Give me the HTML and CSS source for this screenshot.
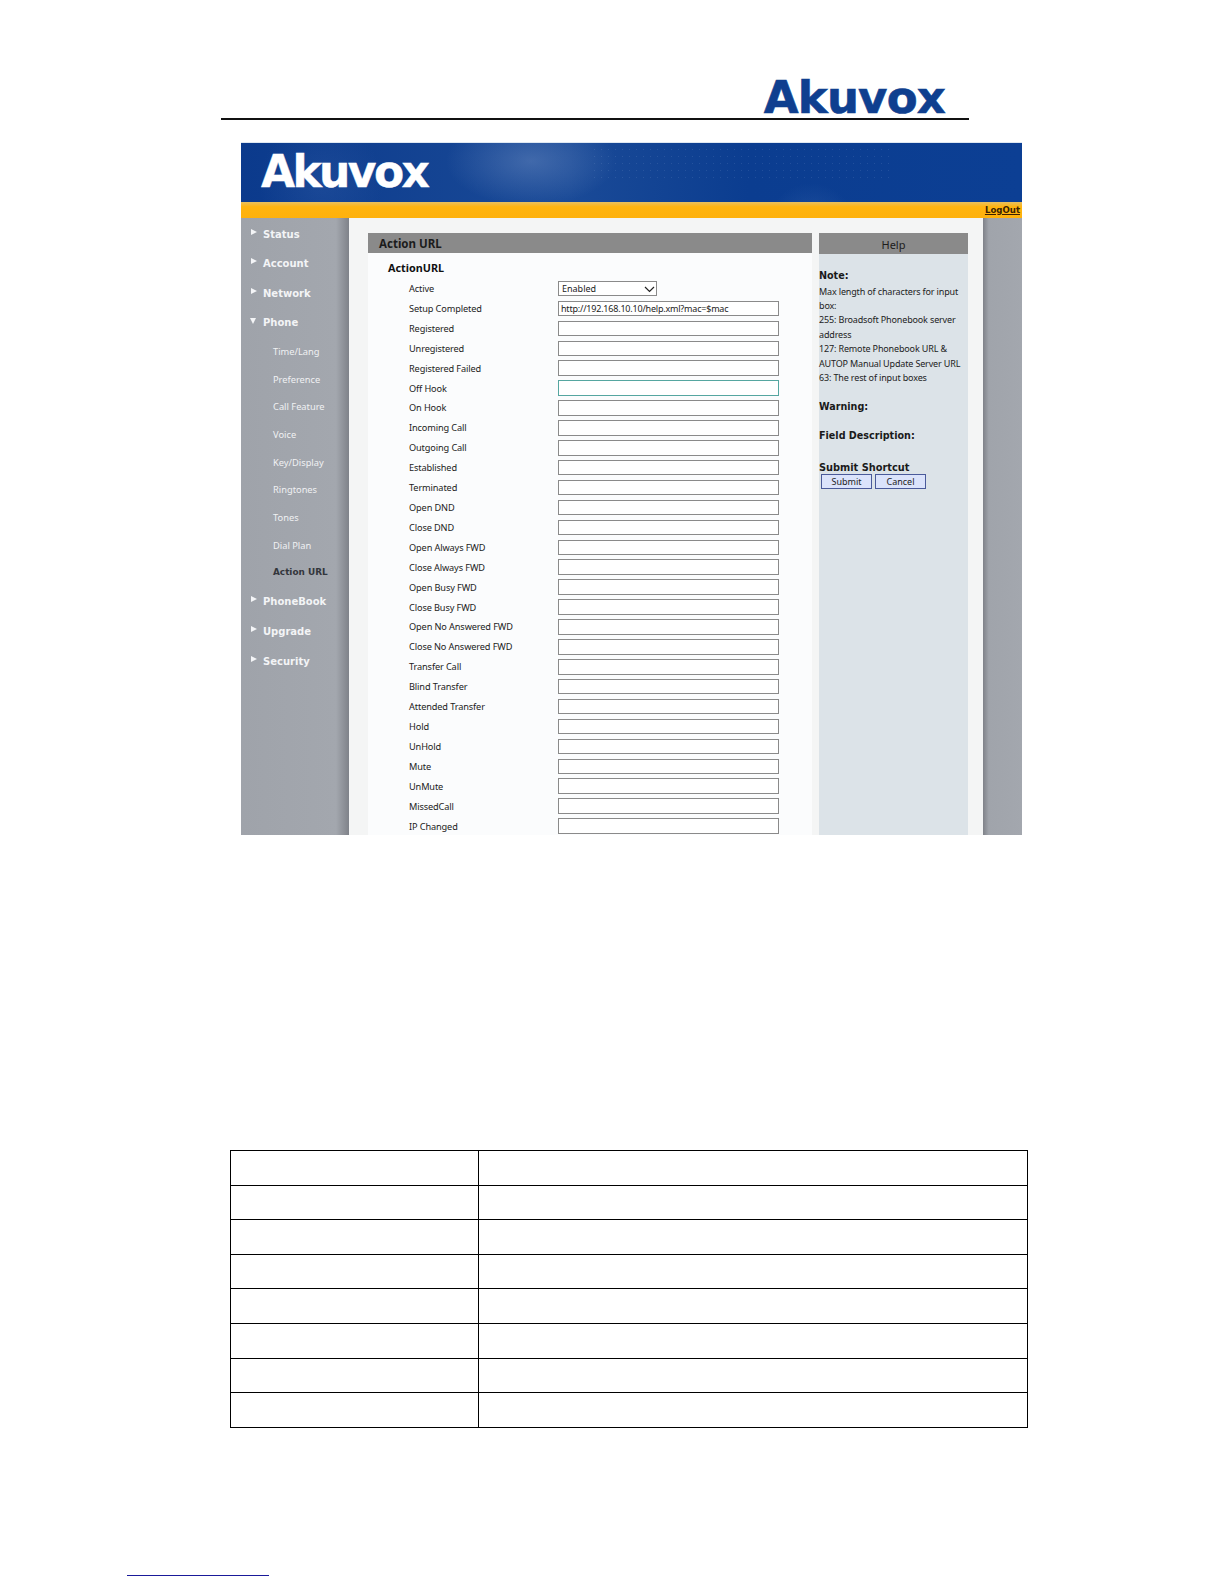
FILE: index.html
```html
<!DOCTYPE html>
<html lang="en">
<head>
<meta charset="utf-8">
<title>Akuvox Action URL</title>
<link rel="stylesheet" href="styles.css">
</head>
<body>
<div class="page">
  <header class="doc-header"><span class="doc-logo">Akuvox</span></header>

  <section class="shot">
    <div class="banner"><span class="banner-logo">Akuvox</span></div>
    <div class="strip"><a class="logout">LogOut</a></div>
    <div class="body">
      <nav class="side">
        <div class="nav"><i class="tri"></i>Status</div>
        <div class="nav"><i class="tri"></i>Account</div>
        <div class="nav"><i class="tri"></i>Network</div>
        <div class="nav"><i class="tri down"></i>Phone</div>
        <div class="sub">Time/Lang</div>
        <div class="sub">Preference</div>
        <div class="sub">Call Feature</div>
        <div class="sub">Voice</div>
        <div class="sub">Key/Display</div>
        <div class="sub">Ringtones</div>
        <div class="sub">Tones</div>
        <div class="sub">Dial Plan</div>
        <div class="sub current">Action URL</div>
        <div class="nav"><i class="tri"></i>PhoneBook</div>
        <div class="nav"><i class="tri"></i>Upgrade</div>
        <div class="nav"><i class="tri"></i>Security</div>
      </nav>
      <div class="content">
        <main class="form-panel">
          <h1 class="form-title">Action URL</h1>
          <h2 class="form-heading">ActionURL</h2>
          <div class="rows">
            <label>Active</label>
            <span class="sel-wrap"><select class="sel"><option>Enabled</option></select><svg class="chev" width="11" height="7" viewBox="0 0 11 7"><path d="M1 1l4.5 4.5L10 1" fill="none" stroke="#222" stroke-width="1.2"/></svg></span>
            <label>Setup Completed</label><input class="url" value="http://192.168.10.10/help.xml?mac=$mac">
            <label>Registered</label><input class="url">
            <label>Unregistered</label><input class="url">
            <label>Registered Failed</label><input class="url">
            <label>Off Hook</label><input class="url focus">
            <label>On Hook</label><input class="url">
            <label>Incoming Call</label><input class="url">
            <label>Outgoing Call</label><input class="url">
            <label>Established</label><input class="url">
            <label>Terminated</label><input class="url">
            <label>Open DND</label><input class="url">
            <label>Close DND</label><input class="url">
            <label>Open Always FWD</label><input class="url">
            <label>Close Always FWD</label><input class="url">
            <label>Open Busy FWD</label><input class="url">
            <label>Close Busy FWD</label><input class="url">
            <label>Open No Answered FWD</label><input class="url">
            <label>Close No Answered FWD</label><input class="url">
            <label>Transfer Call</label><input class="url">
            <label>Blind Transfer</label><input class="url">
            <label>Attended Transfer</label><input class="url">
            <label>Hold</label><input class="url">
            <label>UnHold</label><input class="url">
            <label>Mute</label><input class="url">
            <label>UnMute</label><input class="url">
            <label>MissedCall</label><input class="url">
            <label>IP Changed</label><input class="url">
          </div>
        </main>
        <aside class="help">
          <div class="help-title">Help</div>
          <h3 class="h-note">Note:</h3>
          <p class="help-text">Max length of characters for input<br>box:<br>255: Broadsoft Phonebook server<br>address<br>127: Remote Phonebook URL &amp;<br>AUTOP Manual Update Server URL<br>63: The rest of input boxes</p>
          <h3 class="h-warn">Warning:</h3>
          <h3 class="h-field">Field Description:</h3>
          <h3 class="h-short">Submit Shortcut</h3>
          <div class="btns"><button class="btn">Submit</button><button class="btn">Cancel</button></div>
        </aside>
      </div>
      <div class="side-right"></div>
    </div>
  </section>

  <table class="doc-table">
    <tr><td></td><td></td></tr>
    <tr><td></td><td></td></tr>
    <tr><td></td><td></td></tr>
    <tr><td></td><td></td></tr>
    <tr><td></td><td></td></tr>
    <tr><td></td><td></td></tr>
    <tr><td></td><td></td></tr>
    <tr><td></td><td></td></tr>
  </table>

  <div class="foot-line"></div>
</div>
</body>
</html>
```
FILE: styles.css
```css
* { box-sizing: border-box; }
html, body { margin: 0; padding: 0; background: #fff; }
.page { width: 1224px; height: 1584px; overflow: hidden; background: #fff; font-family: "Noto Sans", "Liberation Sans", sans-serif; }

.doc-header { margin-left: 221px; width: 748px; height: 120px; border-bottom: 2px solid #111; display: flex; justify-content: flex-end; align-items: flex-end; padding-right: 24px; }
.doc-logo { font: 800 45px/45px "DejaVu Sans", sans-serif; color: #0f3f8f; letter-spacing: -.8px; margin-bottom: -2px; -webkit-text-stroke: .6px #0f3f8f; }

.shot { margin: 22px 0 0 241px; width: 781px; height: 693px; overflow: hidden; display: flex; flex-direction: column; font-size: 9.2px; color: #222; }

.banner { position: relative; height: 60px; flex: none; padding: 0 0 0 20px; overflow: hidden; border-top: 1px solid #dfe8f2;
  background:
    radial-gradient(ellipse 85px 45px at 290px 18px, rgba(120,150,200,.42), rgba(120,150,200,0) 100%),
    radial-gradient(circle 62px at 80px 40px, rgba(70,110,180,.22), rgba(70,110,180,0) 100%),
    radial-gradient(circle 45px at 570px 85px, rgba(90,130,190,.28), rgba(90,130,190,0) 100%),
    linear-gradient(90deg, #0b3a8c 0%, #1a4a97 42%, #0b3d90 65%, #0c3f94 100%); }
.banner::after { content: ""; position: absolute; left: 350px; top: 3px; width: 300px; height: 36px;
  background-image: radial-gradient(circle 1px, rgba(190,210,240,.35) 60%, transparent 100%); background-size: 7px 7px; opacity: .35; }
.banner-logo { display: block; font: 800 44px/58px "DejaVu Sans", sans-serif; color: #fff; letter-spacing: -2.6px; -webkit-text-stroke: .4px #fff; }

.strip { height: 16px; flex: none; background: linear-gradient(#e8c060 0, #ffb40f 30%, #feb10c 100%); display: flex; justify-content: flex-end; align-items: center; padding-right: 2px; }
.logout { font: 700 8.6px/18px "DejaVu Sans", sans-serif; color: #3a1f00; text-decoration: underline; }

.body { display: flex; flex: 1; min-height: 0; }
.side { width: 108px; flex: none; padding-top: 1.5px; background: linear-gradient(90deg, #9fa3aa 0, #a3a7ae 88%, #7f8289 100%); }
.nav { height: 29.6px; padding-left: 22px; position: relative; font: 700 10px/29.6px "DejaVu Sans", sans-serif; color: #f3f4f6; }
.tri { position: absolute; left: 10px; top: 9px; width: 0; height: 0; border-left: 6px solid #f4f5f7; border-top: 3.5px solid transparent; border-bottom: 3.5px solid transparent; }
.tri.down { left: 9px; top: 10px; border-top: 6px solid #f4f5f7; border-bottom: 0; border-left: 3.5px solid transparent; border-right: 3.5px solid transparent; }
.sub { height: 27.7px; line-height: 27.7px; padding-left: 32px; color: #f0f1f3; font-size: 9.3px; }
.sub.current { margin-bottom: .4px; color: #33363c; font-weight: 700; font-family: "DejaVu Sans", sans-serif; font-size: 8.9px; }

.content { width: 634px; flex: none; display: flex; gap: 7px; padding: 15px 16px 0 19px; background: #f4f5f5; }
.form-panel { width: 444px; flex: none; background: #fbfcfd; }
.form-title { margin: 0; height: 20px; padding-left: 11px; background: #8a8a8a; font: 700 11.5px/22px "Noto Sans", sans-serif; color: #1c1c1c; }
.form-heading { margin: 7px 0 2.6px 20px; font: 700 10.8px/16px "Noto Sans", sans-serif; color: #111; }
.rows { display: grid; grid-template-columns: 149px 221px; grid-auto-rows: 19.92px; padding-left: 41px; align-items: center; justify-items: start; }
.rows label { white-space: nowrap; color: #222; font-size: 9.2px; letter-spacing: -.12px; }
.url { width: 221px; height: 15.5px; padding: 0 2px; border: 1px solid #8a8a8a; background: #fff; font: 9px "Noto Sans", sans-serif; letter-spacing: -.2px; color: #222; border-radius: 0; outline: 0; }
.url.focus { border-color: #55a6a0; }
.sel-wrap { position: relative; display: block; width: 99px; height: 15px; }
.sel { display: block; appearance: none; -webkit-appearance: none; width: 99px; height: 15px; padding: 0 0 2px 3px; border: 1px solid #8a8a8a; background: #fff; font: 9px "Noto Sans", sans-serif; color: #222; border-radius: 0; }
.chev { position: absolute; right: 2px; top: 5px; }

.help { width: 149px; flex: none; background: #dce3e8; white-space: nowrap; }
.help-title { height: 21px; padding-top: 1px; background: #8a8a8a; text-align: center; font-size: 11px; line-height: 21px; color: #1c1c1c; }
.help h3 { margin: 0; font: 700 9.6px/14px "DejaVu Sans", sans-serif; color: #1a1a1a; }
.help .h-note { padding-top: 15px; }
.help .h-warn { margin-top: 14.5px; }
.help .h-field { margin-top: 15px; }
.help .h-short { margin-top: 18px; font-size: 9.8px; }
.help-text { margin: 1.5px 0 0; font-size: 9px; line-height: 14.4px; letter-spacing: -.15px; color: #222; }
.btns { display: flex; gap: 3px; margin: -1px 0 0 2px; }
.btn { width: 51px; height: 15px; padding: 0; border: 1px solid #4a5a9a; background: #dbe3fb; font: 9px/13px "Noto Sans", sans-serif; color: #222; border-radius: 0; }

.side-right { flex: 1; background: linear-gradient(90deg, #7f8289 0, #a0a4ab 15%, #a3a7ae 100%); }

.doc-table { margin: 315px 0 0 230px; width: 798px; border-collapse: collapse; table-layout: fixed; }
.doc-table td { height: 34.6px; border: 1px solid #000; padding: 0; }
.doc-table td:first-child { width: 248px; }

.foot-line { margin: 147px 0 0 127px; width: 142px; height: 1px; background: #1a1a9a; }
```
